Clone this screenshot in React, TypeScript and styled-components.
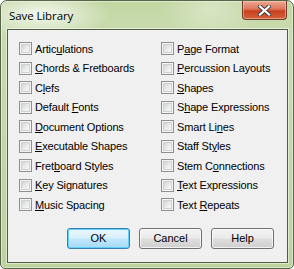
import styled, { createGlobalStyle } from 'styled-components';

const GlobalStyle = createGlobalStyle`
  html, body {
    margin: 0;
    padding: 0;
    background: #ffffff;
  }
  body {
    font-family: "Liberation Sans", Arial, sans-serif;
  }
`;

type Item = { label: string; key: number };

const leftItems: Item[] = [
  { label: 'Articulations', key: 5 },
  { label: 'Chords & Fretboards', key: 0 },
  { label: 'Clefs', key: 1 },
  { label: 'Default Fonts', key: 8 },
  { label: 'Document Options', key: 0 },
  { label: 'Executable Shapes', key: 0 },
  { label: 'Fretboard Styles', key: 4 },
  { label: 'Key Signatures', key: 0 },
  { label: 'Music Spacing', key: 0 },
];

const rightItems: Item[] = [
  { label: 'Page Format', key: 1 },
  { label: 'Percussion Layouts', key: 0 },
  { label: 'Shapes', key: 0 },
  { label: 'Shape Expressions', key: 1 },
  { label: 'Smart Lines', key: 8 },
  { label: 'Staff Styles', key: 8 },
  { label: 'Stem Connections', key: 6 },
  { label: 'Text Expressions', key: 0 },
  { label: 'Text Repeats', key: 5 },
];

const Label = ({ item }: { item: Item }) => (
  <LabelText>
    {item.label.slice(0, item.key)}
    <u>{item.label.charAt(item.key)}</u>
    {item.label.slice(item.key + 1)}
  </LabelText>
);

const CloseGlyph = () => (
  <svg width="13" height="11" viewBox="0 0 13 11">
    <path d="M2 1.5 L11 9.5 M11 1.5 L2 9.5" stroke="#3c3c3c" strokeWidth="4" strokeLinecap="square" fill="none" />
    <path d="M2 1.5 L11 9.5 M11 1.5 L2 9.5" stroke="#ffffff" strokeWidth="2.2" strokeLinecap="square" fill="none" />
  </svg>
);

export default function App(): JSX.Element {
  return (
    <>
      <GlobalStyle />
      <Window>
        <TitleBar>
          <Title>Save Library</Title>
          <CloseButton>
            <CloseGlyph />
          </CloseButton>
        </TitleBar>
        <Client>
          <OptionGrid>
            {[...leftItems, ...rightItems].map((item) => (
              <OptionRow key={item.label}>
                <CheckBox />
                <Label item={item} />
              </OptionRow>
            ))}
          </OptionGrid>
          <ButtonRow>
            <Button $isDefault>OK</Button>
            <Button>Cancel</Button>
            <Button>Help</Button>
          </ButtonRow>
        </Client>
      </Window>
    </>
  );
}

const Window = styled.div`
  width: 294px;
  height: 269px;
  box-sizing: border-box;
  border: 1px solid #56654a;
  border-radius: 7px 7px 5px 5px;
  padding: 0 5px 5px 6px;
  display: flex;
  flex-direction: column;
  background:
    radial-gradient(ellipse 70px 24px at 40px 13px, rgba(255, 255, 255, 0.8), rgba(255, 255, 255, 0) 100%),
    radial-gradient(ellipse 50px 30px at 210px 8px, rgba(255, 255, 255, 0.35), rgba(255, 255, 255, 0) 100%),
    linear-gradient(180deg, #c2d7a2 0px, #c9dbae 30px, #bdd29c 100%);
  box-shadow: inset 0 0 0 1px rgba(255, 255, 255, 0.45);
  overflow: hidden;
`;

const TitleBar = styled.div`
  height: 28px;
  display: flex;
  align-items: flex-start;
  justify-content: space-between;
  padding-left: 2px;
`;

const Title = styled.span`
  font-family: "Open Sans", "Noto Sans", sans-serif;
  font-size: 11.5px;
  color: #000000;
  margin-top: 7px;
  letter-spacing: -0.1px;
`;

const CloseButton = styled.div`
  width: 45px;
  height: 19px;
  margin-right: 1px;
  box-sizing: border-box;
  border: 1px solid #6e3b2e;
  border-top: none;
  border-radius: 0 0 4px 4px;
  display: flex;
  align-items: center;
  justify-content: center;
  background: linear-gradient(180deg, #eba995 0%, #dc7559 45%, #c9401c 55%, #d5623d 100%);
  box-shadow: inset 0 0 0 1px rgba(255, 220, 200, 0.45);
`;

const Client = styled.div`
  flex: 1;
  border: 1px solid #4f5d43;
  background: #f0f0f0;
  box-shadow: 0 0 0 1px rgba(255, 255, 255, 0.5);
  padding: 9px 13px 0 11px;
  display: flex;
  flex-direction: column;
`;

const OptionGrid = styled.div`
  display: grid;
  grid-template-columns: 142px 1fr;
  grid-template-rows: repeat(9, 19.5px);
  grid-auto-flow: column;
`;

const OptionRow = styled.div`
  display: flex;
  align-items: center;
  gap: 3px;
`;

const CheckBox = styled.span`
  width: 13px;
  height: 13px;
  box-sizing: border-box;
  border: 1px solid #8e8f8f;
  flex-shrink: 0;
  background: #f4f4f4;
  padding: 1px;
  display: flex;
  &::after {
    content: '';
    flex: 1;
    background: linear-gradient(135deg, #d2d5d8 0%, #e9ebec 55%, #f8f8f8 100%);
    border: 1px solid #cfd1d3;
  }
`;

const LabelText = styled.span`
  font-size: 11px;
  color: #000000;
  white-space: nowrap;
  letter-spacing: -0.15px;
  u {
    text-underline-offset: 1px;
  }
`;

const ButtonRow = styled.div`
  display: flex;
  justify-content: flex-end;
  gap: 9px;
  margin-top: 13px;
`;

const Button = styled.div<{ $isDefault?: boolean }>`
  width: 63px;
  height: 21px;
  box-sizing: border-box;
  border-radius: 3px;
  border: 1px solid ${(p) => (p.$isDefault ? '#3c7fb1' : '#707070')};
  display: flex;
  align-items: center;
  justify-content: center;
  font-size: 11px;
  color: #000000;
  background: ${(p) => (p.$isDefault
    ? 'linear-gradient(180deg, #eaf6fd 0%, #d9f0fc 45%, #bee6fd 55%, #a7d9f5 100%)'
    : 'linear-gradient(180deg, #f2f2f2 0%, #ebebeb 45%, #dddddd 55%, #cfcfcf 100%)')};
  box-shadow: inset 0 0 0 1px ${(p) => (p.$isDefault ? '#5fd0f9' : 'rgba(255, 255, 255, 0.7)')};
`;
